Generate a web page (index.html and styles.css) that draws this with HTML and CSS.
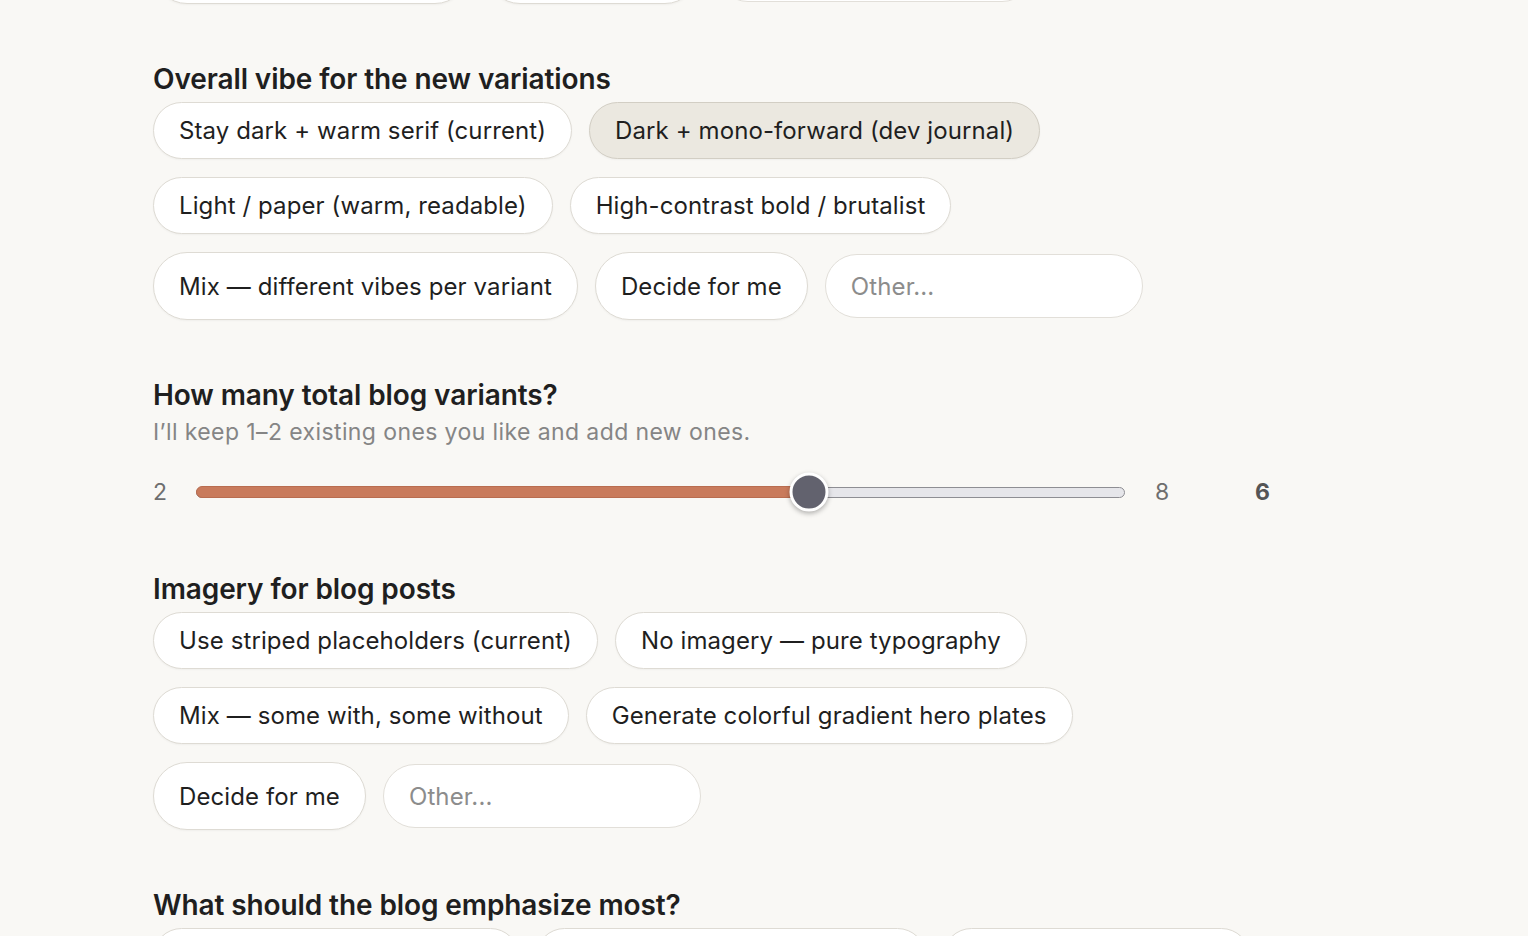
FILE: index.html
```html
<!DOCTYPE html>
<html lang="en">
  <head>
    <meta charset="UTF-8" />
    <meta name="viewport" content="width=device-width, initial-scale=1.0" />
    <title>Blog redesign - Questions</title>
    <link rel="stylesheet" href="styles.css">
  </head>
  <body>
    <main class="form">
      <!-- previous question, scrolled mostly out of view -->
      <section class="question question-prev">
        <div class="options">
          <button class="option option-tall">Mostly the same layout</button>
          <button class="option option-tall">Decide for me</button>
          <input class="option-other" type="text" placeholder="Other..." />
        </div>
      </section>

      <section class="question">
        <h2 class="question-title">Overall vibe for the new variations</h2>
        <div class="options">
          <button class="option">Stay dark + warm serif (current)</button>
          <button class="option selected">Dark + mono-forward (dev journal)</button>
          <button class="option">Light / paper (warm, readable)</button>
          <button class="option">High-contrast bold / brutalist</button>
          <button class="option option-tall">Mix — different vibes per variant</button>
          <button class="option option-tall">Decide for me</button>
          <input class="option-other" type="text" placeholder="Other..." />
        </div>
      </section>

      <section class="question">
        <h2 class="question-title">How many total blog variants?</h2>
        <p class="question-hint">I’ll keep 1–2 existing ones you like and add new ones.</p>
        <div class="slider-row">
          <span class="slider-label">2</span>
          <div class="slider-track" style="--p: 0.6667">
            <div class="slider-fill"></div>
            <div class="slider-thumb"></div>
          </div>
          <span class="slider-label">8</span>
          <span class="slider-value">6</span>
        </div>
      </section>

      <section class="question">
        <h2 class="question-title">Imagery for blog posts</h2>
        <div class="options">
          <button class="option">Use striped placeholders (current)</button>
          <button class="option">No imagery — pure typography</button>
          <button class="option">Mix — some with, some without</button>
          <button class="option">Generate colorful gradient hero plates</button>
          <button class="option option-tall">Decide for me</button>
          <input class="option-other" type="text" placeholder="Other..." />
        </div>
      </section>

      <section class="question">
        <h2 class="question-title">What should the blog emphasize most?</h2>
        <div class="options">
          <button class="option">Writing quality &amp; long reads</button>
          <button class="option">Code, projects &amp; experiments</button>
          <button class="option">Personal voice &amp; story</button>
        </div>
      </section>
    </main>
  </body>
</html>
```

FILE: styles.css
```css
* {
  margin: 0;
  padding: 0;
  box-sizing: border-box;
  font-family: Inter, "Noto Sans", sans-serif;
}

body {
  background-color: #f9f8f5;
  color: #1f1f1f;
  overflow: hidden;
}

.form {
  width: 1117px;
  margin: -64px 0 0 153px;
}

.question + .question {
  margin-top: 59px;
}

.question-title {
  font-size: 28px;
  line-height: 32px;
  font-weight: 600;
  letter-spacing: -0.1px;
  color: #1f1f1f;
  margin-bottom: 7px;
}

.question-hint {
  font-size: 23px;
  line-height: 28px;
  letter-spacing: 0.4px;
  color: #858585;
  margin-top: 7px;
}

/* Option pills */
.options {
  display: flex;
  flex-wrap: wrap;
  gap: 18px 17px;
}

.option {
  height: 57px;
  padding: 0 25px;
  font-size: 24px;
  letter-spacing: 0.1px;
  color: #1f1f1f;
  background-color: white;
  border: 1.5px solid #dedbd4;
  border-radius: 999px;
  box-shadow: 0 1px 2px rgba(0, 0, 0, 0.04);
  cursor: pointer;
}

.option.selected {
  background-color: #ebe8e0;
  border-color: #d2cec4;
}

.option-tall {
  height: 68px;
}

.option-other {
  width: 318px;
  height: 64px;
  margin: 2px 0;
  padding: 0 25px;
  font-size: 24px;
  letter-spacing: 0.1px;
  color: #1f1f1f;
  background-color: white;
  border: 1.5px solid #e2dfd9;
  border-radius: 999px;
  outline: none;
}

.option-other::placeholder {
  color: #8c8c8c;
}

/* Slider */
.slider-row {
  display: flex;
  align-items: center;
  height: 44px;
  margin-top: 24px;
  gap: 30px;
}

.slider-label {
  font-size: 23px;
  color: #6e6e6e;
  width: 13px;
}

.slider-track {
  position: relative;
  flex: 1;
  height: 11px;
  background-color: #e6e6ea;
  border: 1.5px solid #8e8e93;
  border-radius: 6px;
}

.slider-fill {
  position: absolute;
  left: -1.5px;
  top: -1.5px;
  bottom: -1.5px;
  width: calc(19px + (100% - 38px) * var(--p));
  background-color: #c97b5c;
  border: 1px solid #b96d50;
  border-radius: 6px;
}

.slider-thumb {
  position: absolute;
  top: 50%;
  left: calc(19px + (100% - 38px) * var(--p));
  width: 39px;
  height: 39px;
  background-color: #62626e;
  border: 3px solid white;
  border-radius: 50%;
  box-shadow: 0 2px 5px rgba(0, 0, 0, 0.3);
  transform: translate(-50%, -50%);
}

.slider-value {
  width: 72px;
  text-align: right;
  font-size: 23px;
  font-weight: 700;
  color: #555;
}
```
